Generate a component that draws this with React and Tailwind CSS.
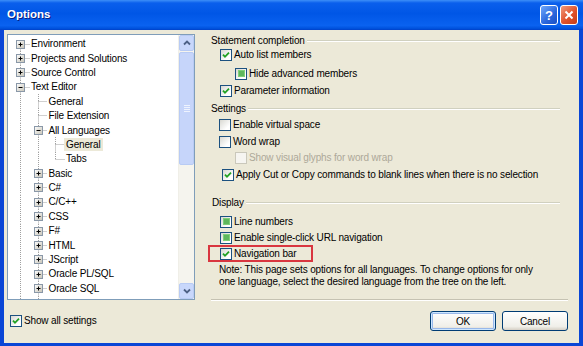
const tree = [
  { g: [], up: false, down: true, box: '+', label: 'Environment' },
  { g: [], up: true, down: true, box: '+', label: 'Projects and Solutions' },
  { g: [], up: true, down: true, box: '+', label: 'Source Control' },
  { g: [], up: true, down: true, box: '-', label: 'Text Editor' },
  { g: [true], up: true, down: true, box: null, label: 'General' },
  { g: [true], up: true, down: true, box: null, label: 'File Extension' },
  { g: [true], up: true, down: true, box: '-', label: 'All Languages' },
  { g: [true, true], up: true, down: true, box: null, label: 'General', selected: true },
  { g: [true, true], up: true, down: false, box: null, label: 'Tabs' },
  { g: [true], up: true, down: true, box: '+', label: 'Basic' },
  { g: [true], up: true, down: true, box: '+', label: 'C#' },
  { g: [true], up: true, down: true, box: '+', label: 'C/C++' },
  { g: [true], up: true, down: true, box: '+', label: 'CSS' },
  { g: [true], up: true, down: true, box: '+', label: 'F#' },
  { g: [true], up: true, down: true, box: '+', label: 'HTML' },
  { g: [true], up: true, down: true, box: '+', label: 'JScript' },
  { g: [true], up: true, down: true, box: '+', label: 'Oracle PL/SQL' },
  { g: [true], up: true, down: true, box: '+', label: 'Oracle SQL' },
]

function Guide({ line }) {
  return (
    <svg width="17.5" height="14.4" className="shrink-0">
      {line && <line x1="8.5" y1="0" x2="8.5" y2="14.4" stroke="#a0a0a0" strokeDasharray="1 1" />}
    </svg>
  )
}

function Node({ up, down, box }) {
  return (
    <svg width="17.5" height="14.4" className="shrink-0">
      <defs>
        <linearGradient id="exp" x1="0" y1="0" x2="1" y2="1">
          <stop offset="0" stopColor="#ffffff" />
          <stop offset="1" stopColor="#c6c3b6" />
        </linearGradient>
      </defs>
      {up && <line x1="8.5" y1="0" x2="8.5" y2="7.5" stroke="#a0a0a0" strokeDasharray="1 1" />}
      {down && <line x1="8.5" y1="7.5" x2="8.5" y2="14.4" stroke="#a0a0a0" strokeDasharray="1 1" />}
      <line x1="8.5" y1="7.5" x2="17.5" y2="7.5" stroke="#a0a0a0" strokeDasharray="1 1" />
      {box && (
        <g>
          <rect x="4.5" y="3.5" width="8" height="8" fill="url(#exp)" stroke="#8a98a8" />
          <line x1="6.5" y1="7.5" x2="10.5" y2="7.5" stroke="#000" />
          {box === '+' && <line x1="8.5" y1="5.5" x2="8.5" y2="9.5" stroke="#000" />}
        </g>
      )}
    </svg>
  )
}

function Check({ state = 'off', disabled = false }) {
  return (
    <span
      className={`flex items-center justify-center w-[12px] h-[12px] shrink-0 border ${
        disabled
          ? 'border-[#cac8bb] bg-[#f6f5f1]'
          : 'border-[#1c5180] bg-[linear-gradient(135deg,#d8d8d2,#ffffff_75%)]'
      }`}
    >
      {state === 'on' && (
        <svg width="8" height="8" viewBox="0 0 8 8">
          <path d="M1 3.6 L3 5.8 L7 1.6" fill="none" stroke="#21a121" strokeWidth="1.8" />
        </svg>
      )}
      {state === 'mixed' && <span className="w-[7px] h-[7px] bg-[#5fb75d] border border-[#7fcf79]" />}
    </span>
  )
}

function Opt({ state, disabled, children, className = '' }) {
  return (
    <div className={`flex items-center h-[15px] gap-[2px] ${className}`}>
      <Check state={state} disabled={disabled} />
      <span className={disabled ? 'text-[#aca899]' : ''}>{children}</span>
    </div>
  )
}

function Group({ label, className = '' }) {
  return (
    <div className={`flex items-center h-[13px] mr-[8px] ${className}`}>
      <span>{label}</span>
      <div className="flex-1 ml-[2px] h-[2px] border-t border-[#d0d0bf] border-b border-b-white" />
    </div>
  )
}

export default function App() {
  return (
    <div className="w-[583px] h-[346px] flex flex-col bg-[#0a46d6] font-['Liberation_Sans',Arial,sans-serif] text-[10px] tracking-[-0.15px] text-black overflow-hidden">
      {/* title bar */}
      <div className="h-[30px] shrink-0 flex items-center justify-between pl-[7px] pr-[5px] bg-[linear-gradient(to_bottom,#3d8ff8_0%,#0a5fec_10%,#0056e6_45%,#0a62f0_85%,#0051dc_95%,#0040c8_100%)]">
        <span className="text-white font-bold text-[11.5px] tracking-normal [text-shadow:1px_1px_0_#0a1e80]">Options</span>
        <div className="flex gap-[2px]">
          <div className="w-[18px] h-[20px] rounded-[3px] border border-white flex items-center justify-center bg-[linear-gradient(135deg,#6fa8fb,#2a66dc_60%,#1a4fc4)] text-white font-bold text-[13px] leading-none">
            ?
          </div>
          <div className="w-[18px] h-[20px] rounded-[3px] border border-white flex items-center justify-center bg-[linear-gradient(135deg,#f19a7c,#e0522c_55%,#c33d17)]">
            <svg width="10" height="10" viewBox="0 0 10 10">
              <path d="M1.5 1.5 L8.5 8.5 M8.5 1.5 L1.5 8.5" stroke="#fff" strokeWidth="2" />
            </svg>
          </div>
        </div>
      </div>

      {/* body */}
      <div className="flex-1 flex flex-col ml-[4px] mr-[4px] mb-[3px] bg-[#ece9d8]">
        <div className="flex items-start h-[270px] shrink-0">
          {/* tree */}
          <div className="ml-[3px] mt-[4px] w-[188px] h-[266px] border border-[#7f9db9] bg-white flex">
            <div className="flex-1 overflow-hidden pt-[1.5px] pl-[4px]">
              {tree.map((t, i) => (
                <div key={i} className="flex items-center h-[14.4px] whitespace-nowrap">
                  {t.g.map((l, j) => (
                    <Guide key={j} line={l} />
                  ))}
                  <Node up={t.up} down={t.down} box={t.box} />
                  <span
                    className={`leading-[13px] ${t.selected ? 'ml-[-1px] px-[2.5px] bg-[#ece9d8]' : 'pl-[1.5px]'}`}
                  >
                    {t.label}
                  </span>
                </div>
              ))}
              <div className="flex h-[14.4px]">
                <Guide line />
                <Guide line />
              </div>
            </div>
            {/* scrollbar */}
            <div className="w-[16px] flex flex-col bg-[#f5f4ee] border-l border-[#f0efe8]">
              <div className="h-[16px] rounded-[2px] border border-[#b8cbf4] bg-[#c8d7fb] flex items-center justify-center">
                <svg width="8" height="6" viewBox="0 0 8 6">
                  <path d="M1 4.5 L4 1.5 L7 4.5" fill="none" stroke="#4d6185" strokeWidth="1.8" />
                </svg>
              </div>
              <div className="h-[113px] mt-[1px] rounded-[2px] border border-[#b8cbf4] bg-[#c6d5fa] flex flex-col items-center justify-center gap-[1px]">
                <div className="w-[6px] h-[1px] bg-[#eef3fe]" />
                <div className="w-[6px] h-[1px] bg-[#eef3fe]" />
                <div className="w-[6px] h-[1px] bg-[#eef3fe]" />
                <div className="w-[6px] h-[1px] bg-[#eef3fe]" />
              </div>
              <div className="flex-1" />
              <div className="h-[16px] rounded-[2px] border border-[#b8cbf4] bg-[#c8d7fb] flex items-center justify-center">
                <svg width="8" height="6" viewBox="0 0 8 6">
                  <path d="M1 1.5 L4 4.5 L7 1.5" fill="none" stroke="#4d6185" strokeWidth="1.8" />
                </svg>
              </div>
            </div>
          </div>

          {/* options */}
          <div className="ml-[16px] w-[357px] pt-[4px] flex flex-col">
            <Group label="Statement completion" />
            <Opt state="on" className="pl-[9px]">Auto list members</Opt>
            <Opt state="mixed" className="pl-[24px] mt-[4px]">Hide advanced members</Opt>
            <Opt state="on" className="pl-[9px] mt-[2px]">Parameter information</Opt>
            <Group label="Settings" className="mt-[4px]" />
            <Opt className="pl-[8px] mt-[2px]">Enable virtual space</Opt>
            <Opt className="pl-[8px] mt-[2px]">Word wrap</Opt>
            <Opt disabled className="pl-[24px] mt-[1px]">Show visual glyphs for word wrap</Opt>
            <Opt state="on" className="pl-[11px] mt-[2px]">Apply Cut or Copy commands to blank lines when there is no selection</Opt>
            <Group label="Display" className="mt-[14px] pl-[1px]" />
            <Opt state="mixed" className="pl-[9px] mt-[5px]">Line numbers</Opt>
            <Opt state="mixed" className="pl-[9px] mt-[1px]">Enable single-click URL navigation</Opt>
            <div className="-ml-[3px] w-[105px] h-[17px] border-2 border-[#d9363f] flex items-center pl-[10px] gap-[2px]">
              <Check state="on" />
              <span>Navigation bar</span>
            </div>
            <p className="mt-[2px] pl-[8px] leading-[12px]">
              Note: This page sets options for all languages. To change options for only
              <br />
              one language, select the desired language from the tree on the left.
            </p>
            <div className="mt-[11px] h-[2px] border-t border-[#c5c2b2] border-b border-b-white" />
          </div>
        </div>

        {/* bottom */}
        <div className="flex-1 flex justify-between pr-[11px]">
          <div className="pl-[6px] pt-[13px]">
            <Opt state="on">Show all settings</Opt>
          </div>
          <div className="pt-[11px] flex gap-[6px]">
            <button className="w-[66px] h-[20px] rounded-[3px] border border-[#003c74] bg-[linear-gradient(to_bottom,#ffffff,#f0efe9_80%,#d6d0c5)] shadow-[inset_0_0_0_1px_#cee7ff,inset_0_0_0_2px_#98b8ea] text-[10px]">
              OK
            </button>
            <button className="w-[66px] h-[20px] rounded-[3px] border border-[#003c74] bg-[linear-gradient(to_bottom,#ffffff,#f0efe9_80%,#d6d0c5)] text-[10px]">
              Cancel
            </button>
          </div>
        </div>
      </div>
    </div>
  )
}
